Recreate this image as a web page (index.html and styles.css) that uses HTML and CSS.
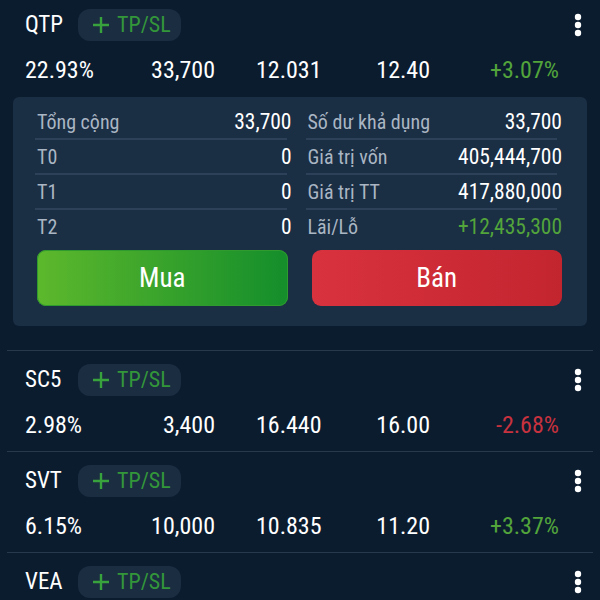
FILE: index.html
```html
<!DOCTYPE html>
<html lang="vi">
<head>
    <meta charset="UTF-8">
    <meta name="viewport" content="width=device-width, initial-scale=1.0">
    <title>Danh mục</title>
    <link rel="stylesheet" href="styles.css">
</head>
<body>
    <div class="list">
        <div class="item first">
            <div class="head">
                <div class="code">QTP</div>
                <div class="tpsl"><svg class="plus" width="18" height="18" viewBox="0 0 18 18"><path d="M9 1v16M1 9h16"/></svg>TP/SL</div>
                <svg class="more" width="8" height="24" viewBox="0 0 8 24"><circle cx="4" cy="4" r="3.2"/><circle cx="4" cy="12" r="3.2"/><circle cx="4" cy="20" r="3.2"/></svg>
            </div>
            <div class="nums">
                <span class="c1">22.93%</span>
                <span class="c2">33,700</span>
                <span class="c3">12.031</span>
                <span class="c4">12.40</span>
                <span class="c5 up">+3.07%</span>
            </div>
            <div class="panel">
                <div class="cols">
                    <div class="col">
                        <div class="row"><span class="lbl">Tổng cộng</span><span class="val">33,700</span></div>
                        <div class="row"><span class="lbl">T0</span><span class="val">0</span></div>
                        <div class="row"><span class="lbl">T1</span><span class="val">0</span></div>
                        <div class="row"><span class="lbl">T2</span><span class="val">0</span></div>
                    </div>
                    <div class="col">
                        <div class="row"><span class="lbl">Số dư khả dụng</span><span class="val">33,700</span></div>
                        <div class="row"><span class="lbl">Giá trị vốn</span><span class="val">405,444,700</span></div>
                        <div class="row"><span class="lbl">Giá trị TT</span><span class="val">417,880,000</span></div>
                        <div class="row"><span class="lbl">Lãi/Lỗ</span><span class="val up">+12,435,300</span></div>
                    </div>
                </div>
                <div class="actions">
                    <button class="btn btn-buy">Mua</button>
                    <button class="btn btn-sell">Bán</button>
                </div>
            </div>
        </div>

        <div class="item">
            <div class="head">
                <div class="code">SC5</div>
                <div class="tpsl"><svg class="plus" width="18" height="18" viewBox="0 0 18 18"><path d="M9 1v16M1 9h16"/></svg>TP/SL</div>
                <svg class="more" width="8" height="24" viewBox="0 0 8 24"><circle cx="4" cy="4" r="3.2"/><circle cx="4" cy="12" r="3.2"/><circle cx="4" cy="20" r="3.2"/></svg>
            </div>
            <div class="nums">
                <span class="c1">2.98%</span>
                <span class="c2">3,400</span>
                <span class="c3">16.440</span>
                <span class="c4">16.00</span>
                <span class="c5 down">-2.68%</span>
            </div>
        </div>

        <div class="item">
            <div class="head">
                <div class="code">SVT</div>
                <div class="tpsl"><svg class="plus" width="18" height="18" viewBox="0 0 18 18"><path d="M9 1v16M1 9h16"/></svg>TP/SL</div>
                <svg class="more" width="8" height="24" viewBox="0 0 8 24"><circle cx="4" cy="4" r="3.2"/><circle cx="4" cy="12" r="3.2"/><circle cx="4" cy="20" r="3.2"/></svg>
            </div>
            <div class="nums">
                <span class="c1">6.15%</span>
                <span class="c2">10,000</span>
                <span class="c3">10.835</span>
                <span class="c4">11.20</span>
                <span class="c5 up">+3.37%</span>
            </div>
        </div>

        <div class="item">
            <div class="head">
                <div class="code">VEA</div>
                <div class="tpsl"><svg class="plus" width="18" height="18" viewBox="0 0 18 18"><path d="M9 1v16M1 9h16"/></svg>TP/SL</div>
                <svg class="more" width="8" height="24" viewBox="0 0 8 24"><circle cx="4" cy="4" r="3.2"/><circle cx="4" cy="12" r="3.2"/><circle cx="4" cy="20" r="3.2"/></svg>
            </div>
        </div>
    </div>
</body>
</html>
```

FILE: styles.css
```css
body {
    font-family: "Roboto Condensed", Roboto, "Liberation Sans", sans-serif;
    margin: 0;
    background: #0b1c2f;
    color: #fff;
    overflow: hidden;
    height: 600px;
}
.list {
    margin-top: -5px;
}
.item {
    border-top: 1px solid #26394d;
    padding: 12px 0 13px;
    margin: 0 7px;
}
.item.first {
    border-top-color: transparent;
    padding-bottom: 24px;
}
.head {
    display: flex;
    align-items: center;
    height: 33px;
    padding: 0 11px 0 18px;
}
.code {
    width: 53px;
    font-size: 23px;
}
.tpsl {
    display: flex;
    align-items: center;
    gap: 7px;
    height: 32px;
    padding: 0 10px 0 14px;
    background: #1b2d41;
    border-radius: 12px;
    color: #33973a;
    font-size: 22px;
}
.plus {
    stroke: #38a33c;
    stroke-width: 2.4;
}
.more {
    margin-left: auto;
    fill: #fff;
}
.nums {
    display: grid;
    grid-template-columns: 125px 65px 115px 100px 1fr;
    height: 26px;
    line-height: 26px;
    margin: 16px 34px 0 18px;
    font-size: 24px;
}
.c2, .c4, .c5 {
    text-align: right;
}
.c3 {
    padding-left: 41px;
}
.up {
    color: #52a43b;
}
.down {
    color: #c7323e;
}
.panel {
    margin: 14px 6px 0 6px;
    background: #1a2e44;
    border-radius: 6px;
    padding: 7px 25px 20px 24px;
}
.cols {
    display: grid;
    grid-template-columns: 1fr 1fr;
    column-gap: 16px;
}
.row {
    display: flex;
    justify-content: space-between;
    align-items: center;
    height: 35px;
    position: relative;
}
.row + .row::before {
    content: "";
    position: absolute;
    top: -1px;
    left: -2px;
    right: 5px;
    height: 2px;
    background: #2d4259;
}
.lbl {
    color: #aab6c3;
    font-size: 20px;
}
.val {
    font-size: 21.5px;
}
.actions {
    display: grid;
    grid-template-columns: 1fr 1fr;
    gap: 24px;
    margin-top: 6px;
}
.btn {
    height: 56px;
    border: none;
    border-radius: 9px;
    color: #fff;
    font-family: inherit;
    font-size: 27px;
    font-weight: 400;
}
.btn-buy {
    background: linear-gradient(90deg, #5db82c, #148e2b);
    box-shadow: inset 0 0 0 1px #2f9a2e;
}
.btn-sell {
    background: linear-gradient(90deg, #d8323e, #c3252f);
}
```
